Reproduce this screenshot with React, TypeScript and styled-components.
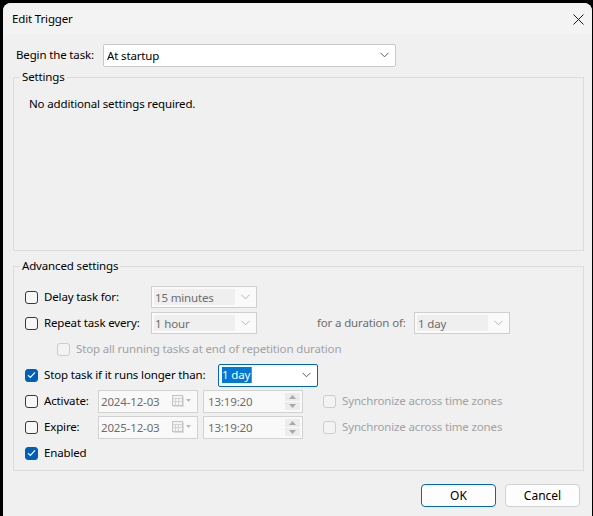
import React from "react";
import styled, { createGlobalStyle } from "styled-components";

const GlobalStyle = createGlobalStyle`
  html, body {
    margin: 0;
    padding: 0;
    background: #000;
  }
  body {
    font-family: "Noto Sans", "Segoe UI", sans-serif;
    font-size: 11.5px;
    letter-spacing: -0.15px;
    color: #000;
  }
`;

const Window = styled.div`
  margin: 3px 0 0 3px;
  width: 589px;
  height: 513px;
  background: #f0f0f0;
  border-radius: 8px 8px 0 0;
  overflow: hidden;
  display: flex;
  flex-direction: column;
`;

const TitleBar = styled.div`
  height: 32px;
  flex-shrink: 0;
  background: #f3f3f3;
  display: flex;
  align-items: center;
  justify-content: space-between;
  padding: 0 8px 0 9px;
`;

const Title = styled.span`
  line-height: 16px;
`;

const Content = styled.div`
  display: flex;
  flex-direction: column;
  padding: 0 8px 0 10px;
`;

const BeginRow = styled.div`
  display: flex;
  align-items: center;
  height: 22px;
  margin-top: 9px;
  padding-left: 3px;
`;

const Label = styled.span<{ $w?: number; $muted?: boolean; $faint?: boolean }>`
  display: inline-block;
  flex-shrink: 0;
  width: ${(p) => (p.$w ? `${p.$w}px` : "auto")};
  line-height: 16px;
  white-space: nowrap;
  color: ${(p) => (p.$faint ? "#a2a2a2" : p.$muted ? "#6d6d6d" : "#000")};
`;

const Select = styled.div<{ $w: number; $focused?: boolean }>`
  box-sizing: border-box;
  width: ${(p) => p.$w}px;
  height: 23px;
  background: #fff;
  border: 1px solid ${(p) => (p.$focused ? "#0067c0" : "#c9c9c9")};
  border-radius: 2px;
  display: flex;
  align-items: center;
  justify-content: space-between;
  padding: 0 6px 0 3px;
`;

const Combo = styled.div<{ $w: number }>`
  box-sizing: border-box;
  width: ${(p) => p.$w}px;
  height: 22px;
  background: #fafafa;
  border: 1px solid #cfcfcf;
  display: flex;
  align-items: center;
  justify-content: space-between;
  padding: 2px 6px 2px 2px;
`;

const ComboField = styled.span`
  flex: 1;
  height: 100%;
  background: #efefef;
  color: #6d6d6d;
  line-height: 17px;
  padding-left: 1px;
  margin-right: 6px;
`;

const Selected = styled.span`
  background: #0078d7;
  color: #fff;
  line-height: 16px;
  border-right: 1px solid #e8701a;
  padding-right: 1px;
`;

const Group = styled.fieldset<{ $h: number }>`
  box-sizing: border-box;
  margin: 0;
  padding: 0;
  min-width: 0;
  height: ${(p) => p.$h}px;
  border: 1px solid #dcdcdc;
  border-radius: 0;
`;

const Legend = styled.legend`
  margin-left: 6px;
  padding: 0 2px;
  line-height: 16px;
`;

const SettingsGroup = styled(Group)`
  margin-top: 3px;
`;

const AdvancedGroup = styled(Group)`
  margin-top: 7px;
`;

const GroupBody = styled.div<{ $pt: number; $pl: number }>`
  padding: ${(p) => p.$pt}px 0 0 ${(p) => p.$pl}px;
  display: flex;
  flex-direction: column;
  gap: 4px;
`;

const Row = styled.div<{ $indent?: number }>`
  display: flex;
  align-items: center;
  height: 22px;
  padding-left: ${(p) => p.$indent ?? 0}px;
`;

const Box = styled.span<{ $checked?: boolean; $disabled?: boolean }>`
  box-sizing: border-box;
  flex-shrink: 0;
  width: 13px;
  height: 13px;
  border-radius: 3px;
  margin-right: 6px;
  display: inline-flex;
  align-items: center;
  justify-content: center;
  border: 1px solid
    ${(p) => (p.$checked ? "#005fb8" : p.$disabled ? "#cdcdcd" : "#3a3a3a")};
  background: ${(p) => (p.$checked ? "#005fb8" : p.$disabled ? "#f3f3f3" : "#f7f7f7")};
`;

const Spacer = styled.span<{ $w: number }>`
  flex-shrink: 0;
  width: ${(p) => p.$w}px;
`;

const Picker = styled.div`
  box-sizing: border-box;
  width: 100px;
  height: 23px;
  flex-shrink: 0;
  background: #f9f9f9;
  border: 1px solid #d2d2d2;
  display: flex;
  align-items: center;
  justify-content: space-between;
  padding: 0 5px 0 2px;
  color: #6d6d6d;
`;

const TimePicker = styled(Picker)`
  padding: 2px 2px 2px 4px;
  margin-left: 5px;
`;

const Spin = styled.div`
  display: flex;
  flex-direction: column;
  gap: 1px;
  height: 100%;
`;

const SpinBtn = styled.span`
  width: 15px;
  flex: 1;
  background: #ececec;
  display: flex;
  align-items: center;
  justify-content: center;
`;

const Footer = styled.div`
  display: flex;
  justify-content: flex-end;
  gap: 9px;
  margin-top: 13px;
  padding-right: 4px;
`;

const Button = styled.button<{ $primary?: boolean }>`
  box-sizing: border-box;
  width: 75px;
  height: 23px;
  font-family: inherit;
  font-size: 12px;
  color: #000;
  background: #fdfdfd;
  border: 1px solid ${(p) => (p.$primary ? "#0067c0" : "#d0d0d0")};
  border-radius: 4px;
  padding: 0;
`;

const Chevron = ({ color = "#5a5a5a" }: { color?: string }) => (
  <svg width="9" height="6" viewBox="0 0 9 6">
    <path d="M0.5 0.8 L4.5 4.8 L8.5 0.8" fill="none" stroke={color} strokeWidth="1" />
  </svg>
);

const Check = () => (
  <svg width="9" height="8" viewBox="0 0 9 8">
    <path d="M1 4.2 L3.4 6.4 L8 1.4" fill="none" stroke="#fff" strokeWidth="1.2" />
  </svg>
);

const CloseIcon = () => (
  <svg width="11" height="11" viewBox="0 0 11 11">
    <path d="M0.5 0.5 L10.5 10.5 M10.5 0.5 L0.5 10.5" stroke="#1a1a1a" strokeWidth="1" />
  </svg>
);

const CalendarIcon = () => (
  <svg width="20" height="12" viewBox="0 0 20 12">
    <rect x="0.5" y="0.5" width="10" height="10" fill="#f4f4f4" stroke="#c4c4c4" />
    <path d="M0.5 3.5 H10.5 M0.5 6.5 H10.5 M3.5 3.5 V10.5 M6.5 3.5 V10.5" stroke="#d4d4d4" />
    <path d="M1.5 11.5 H11.5 V1.5" fill="none" stroke="#dcdcdc" />
    <path d="M14 4 L19 4 L16.5 7 Z" fill="#b8b8b8" />
  </svg>
);

const Tri = ({ up }: { up?: boolean }) => (
  <svg width="7" height="4" viewBox="0 0 7 4">
    <path d={up ? "M0 4 L3.5 0 L7 4 Z" : "M0 0 L3.5 4 L7 0 Z"} fill="#a9a9a9" />
  </svg>
);

const Checkbox = ({ checked, disabled }: { checked?: boolean; disabled?: boolean }) => (
  <Box $checked={checked} $disabled={disabled}>
    {checked && <Check />}
  </Box>
);

const DateRow = ({ label, date }: { label: string; date: string }) => (
  <Row>
    <Checkbox />
    <Label $w={54}>{label}</Label>
    <Picker>
      <span>{date}</span>
      <CalendarIcon />
    </Picker>
    <TimePicker>
      <span>13:19:20</span>
      <Spin>
        <SpinBtn>
          <Tri up />
        </SpinBtn>
        <SpinBtn>
          <Tri />
        </SpinBtn>
      </Spin>
    </TimePicker>
    <Spacer $w={20} />
    <Checkbox disabled />
    <Label $faint>Synchronize across time zones</Label>
  </Row>
);

export default function App() {
  return (
    <>
      <GlobalStyle />
      <Window>
        <TitleBar>
          <Title>Edit Trigger</Title>
          <CloseIcon />
        </TitleBar>
        <Content>
          <BeginRow>
            <Label $w={87}>Begin the task:</Label>
            <Select $w={293}>
              <span>At startup</span>
              <Chevron />
            </Select>
          </BeginRow>

          <SettingsGroup $h={182}>
            <Legend>Settings</Legend>
            <GroupBody $pt={11} $pl={15}>
              <Label>No additional settings required.</Label>
            </GroupBody>
          </SettingsGroup>

          <AdvancedGroup $h={213}>
            <Legend>Advanced settings</Legend>
            <GroupBody $pt={12} $pl={11}>
              <Row>
                <Checkbox />
                <Label $w={107}>Delay task for:</Label>
                <Combo $w={106}>
                  <ComboField>15 minutes</ComboField>
                  <Chevron color="#b5b5b5" />
                </Combo>
              </Row>
              <Row>
                <Checkbox />
                <Label $w={107}>Repeat task every:</Label>
                <Combo $w={106}>
                  <ComboField>1 hour</ComboField>
                  <Chevron color="#b5b5b5" />
                </Combo>
                <Spacer $w={60} />
                <Label $w={97} $muted>
                  for a duration of:
                </Label>
                <Combo $w={96}>
                  <ComboField>1 day</ComboField>
                  <Chevron color="#b5b5b5" />
                </Combo>
              </Row>
              <Row $indent={32}>
                <Checkbox disabled />
                <Label $faint>Stop all running tasks at end of repetition duration</Label>
              </Row>
              <Row>
                <Checkbox checked />
                <Label $w={174}>Stop task if it runs longer than:</Label>
                <Select $w={100} $focused>
                  <Selected>1 day</Selected>
                  <Chevron />
                </Select>
              </Row>
              <DateRow label="Activate:" date="2024-12-03" />
              <DateRow label="Expire:" date="2025-12-03" />
              <Row>
                <Checkbox checked />
                <Label>Enabled</Label>
              </Row>
            </GroupBody>
          </AdvancedGroup>

          <Footer>
            <Button $primary>OK</Button>
            <Button>Cancel</Button>
          </Footer>
        </Content>
      </Window>
    </>
  );
}
